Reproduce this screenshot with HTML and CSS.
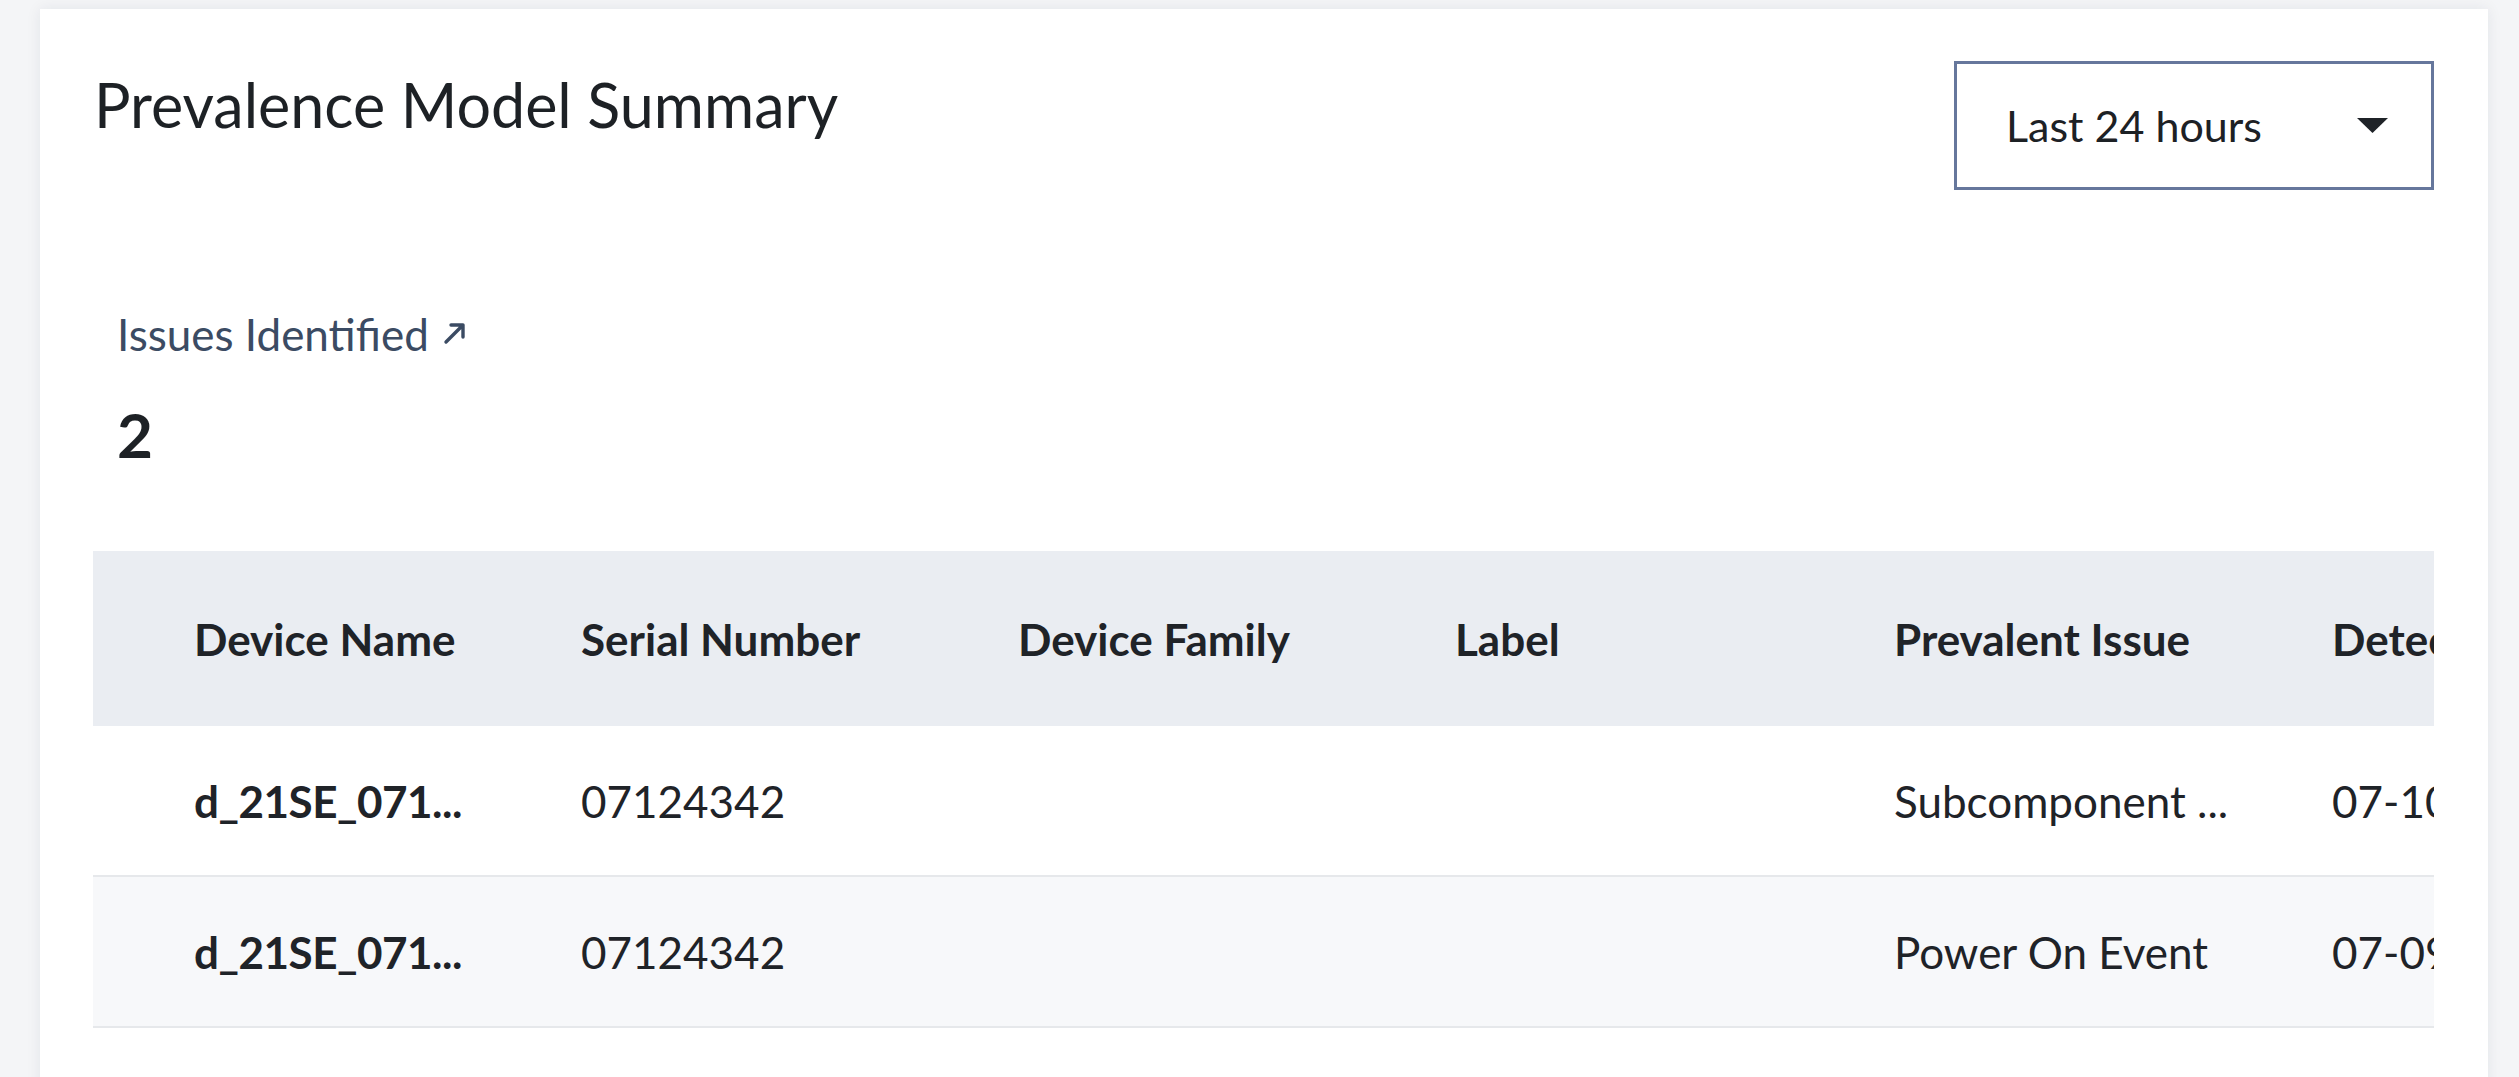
FILE: index.html
```html
<!DOCTYPE html>
<html lang="en">
<head>
<meta charset="utf-8">
<title>Prevalence Model Summary</title>
<link rel="stylesheet" href="styles.css">
</head>
<body>
  <main class="card">
    <header class="card-head">
      <h1 class="title">Prevalence Model Summary</h1>
      <div class="select">
        <span class="select-label">Last 24 hours</span>
        <svg class="caret" viewBox="0 0 31 15" width="31" height="15" aria-hidden="true"><path d="M0 0 H31 L15.5 15 Z" fill="#1f2328"/></svg>
      </div>
    </header>

    <section class="stat">
      <a class="stat-label" href="#">Issues Identified<svg class="arrow" viewBox="0 0 24 24" width="24" height="24" aria-hidden="true"><path d="M3 21 L20 4 M8 4 H20 V16" fill="none" stroke="#3b4b63" stroke-width="3.4" stroke-linecap="round" stroke-linejoin="round"/></svg></a>
      <div class="stat-value">2</div>
    </section>

    <div class="table">
      <div class="row head">
        <div class="cell lead"></div>
        <div class="cell">Device Name</div>
        <div class="cell">Serial Number</div>
        <div class="cell">Device Family</div>
        <div class="cell">Label</div>
        <div class="cell">Prevalent Issue</div>
        <div class="cell">Detected At</div>
      </div>
      <div class="row">
        <div class="cell lead"></div>
        <div class="cell strong">d_21SE_071...</div>
        <div class="cell">07124342</div>
        <div class="cell"></div>
        <div class="cell"></div>
        <div class="cell">Subcomponent ...</div>
        <div class="cell">07-10-2024 14:32</div>
      </div>
      <div class="row alt">
        <div class="cell lead"></div>
        <div class="cell strong">d_21SE_071...</div>
        <div class="cell">07124342</div>
        <div class="cell"></div>
        <div class="cell"></div>
        <div class="cell">Power On Event</div>
        <div class="cell">07-09-2024 09:15</div>
      </div>
    </div>
  </main>
</body>
</html>
```

FILE: styles.css
```css
html, body {
  margin: 0;
  padding: 0;
}

body {
  background: #f4f5f7;
  font-family: Lato, "Open Sans", "Liberation Sans", sans-serif;
  color: #1f2328;
  padding: 9px 31px 0 40px;
  height: 1077px;
  box-sizing: border-box;
  overflow: hidden;
}

.card {
  background: #ffffff;
  box-shadow: 0 0 14px rgba(30, 40, 60, 0.08);
  padding: 52px 54px 60px 53px;
  min-height: 1200px;
  box-sizing: border-box;
}

.card-head {
  display: flex;
  justify-content: space-between;
  align-items: flex-start;
}

.title {
  margin: 7px 0 0 0;
  font-size: 61px;
  line-height: 1.2;
  font-weight: 400;
  color: #1d2125;
  padding-left: 1px;
}

.select {
  width: 480px;
  height: 129px;
  box-sizing: border-box;
  border: 3px solid #66779c;
  display: flex;
  align-items: center;
  justify-content: space-between;
  padding: 0 43px 0 49px;
}

.select-label {
  font-size: 43px;
  color: #1d2125;
}

.caret {
  display: block;
}

.stat {
  margin: 118px 0 0 24px;
}

.stat-label {
  display: inline-flex;
  align-items: center;
  gap: 14px;
  font-size: 44px;
  line-height: 1.2;
  color: #3b4b63;
  text-decoration: none;
}

.arrow {
  display: block;
  margin-top: -3px;
}

.stat-value {
  margin-top: 36px;
  font-size: 62px;
  line-height: 1.2;
  font-weight: 700;
  color: #1d2125;
}

.table {
  margin-top: 80px;
  overflow: hidden;
}

.row {
  display: grid;
  grid-template-columns: 101px 387px 437px 437px 439px 438px 600px;
  align-items: center;
  height: 151px;
  border-bottom: 2px solid #e6e8eb;
  box-sizing: border-box;
  font-size: 44px;
  white-space: nowrap;
}

.row.head {
  height: 175px;
  background: #eaedf2;
  border-bottom: none;
  font-weight: 700;
}

.row.alt {
  background: #f7f8fa;
}

.cell {
  overflow: hidden;
}

.cell.strong {
  font-weight: 700;
  letter-spacing: -0.5px;
}
```
